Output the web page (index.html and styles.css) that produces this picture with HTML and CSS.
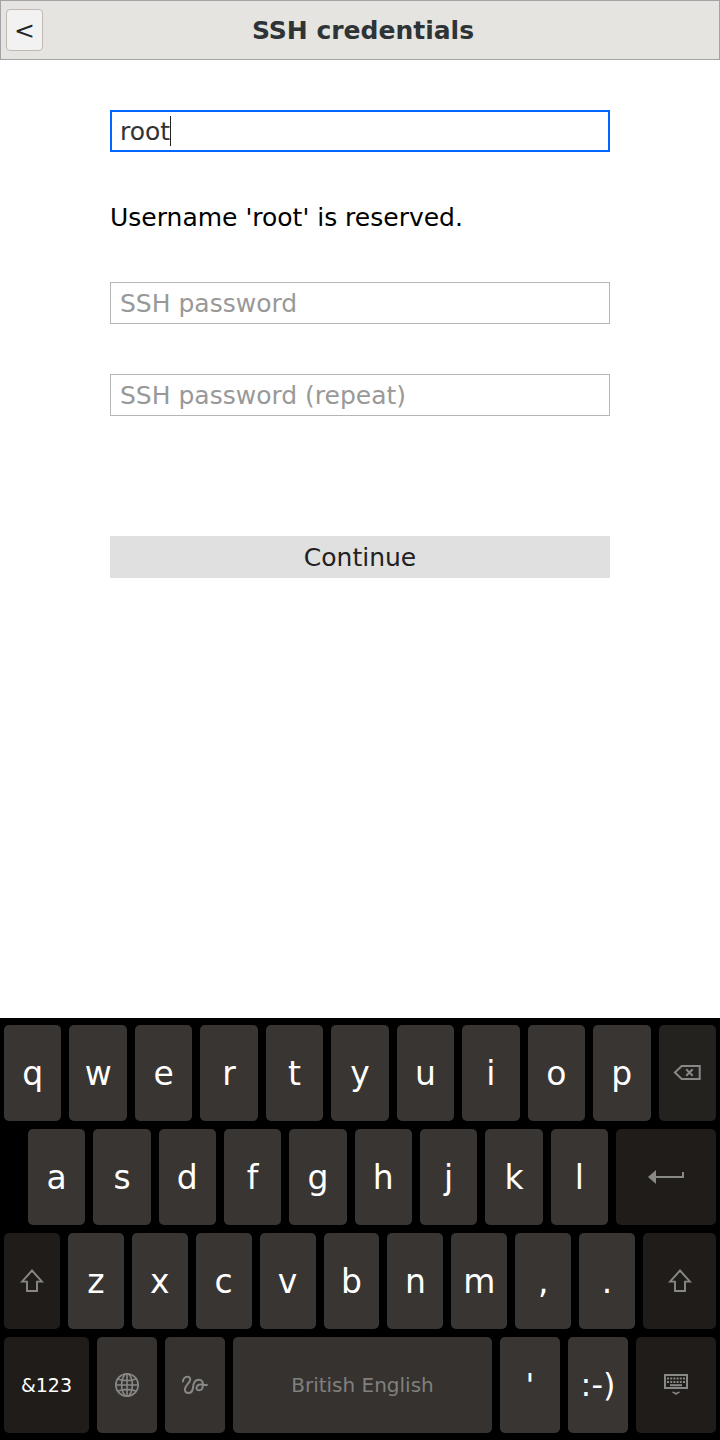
FILE: index.html
```html
<!DOCTYPE html>
<html lang="en">
<head>
<meta charset="utf-8">
<title>SSH credentials</title>
<link rel="stylesheet" href="styles.css">
</head>
<body>
<div class="screen">
  <header class="topbar">
    <button class="back">&lt;</button>
    <h1 class="title">SSH credentials</h1>
  </header>
  <main class="form">
    <div class="field focused"><span>root</span><i class="caret"></i></div>
    <p class="message">Username 'root' is reserved.</p>
    <div class="field placeholder">SSH password</div>
    <div class="field placeholder repeat">SSH password (repeat)</div>
    <button class="continue">Continue</button>
  </main>
  <section class="keyboard">
    <div class="row">
      <div class="key">q</div><div class="key">w</div><div class="key">e</div><div class="key">r</div><div class="key">t</div><div class="key">y</div><div class="key">u</div><div class="key">i</div><div class="key">o</div><div class="key">p</div>
      <div class="key backspace"><svg width="28" height="16" viewBox="-0.7 0 28 16"><path class="line" d="M8 1H26V14H8L1.2 7.5Z"/><path class="line" d="M12.5 4.3L19 10.7M19 4.3L12.5 10.7"/></svg></div>
    </div>
    <div class="row row-home">
      <div class="key">a</div><div class="key">s</div><div class="key">d</div><div class="key">f</div><div class="key">g</div><div class="key">h</div><div class="key">j</div><div class="key">k</div><div class="key">l</div>
      <div class="key dark enter"><svg width="36" height="14" viewBox="0 0 36 14"><path class="line" d="M7 7H35V2"/><path class="solid" d="M0 7L8 0V14Z"/></svg></div>
    </div>
    <div class="row">
      <div class="key dark"><svg width="24" height="24" viewBox="0 0 24 24"><path class="line shift" d="M12 1.5L22 12.6H17V22H7V12.6H2Z"/></svg></div>
      <div class="key">z</div><div class="key">x</div><div class="key">c</div><div class="key">v</div><div class="key">b</div><div class="key">n</div><div class="key">m</div><div class="key">,</div><div class="key">.</div>
      <div class="key dark shift-right"><svg width="24" height="24" viewBox="0 0 24 24"><path class="line shift" d="M12 1.5L22 12.6H17V22H7V12.6H2Z"/></svg></div>
    </div>
    <div class="row row-bottom">
      <div class="key dark symbols">&amp;123</div>
      <div class="key muted"><svg width="26" height="26" viewBox="0 0 26 26"><g class="line thin"><circle cx="13" cy="13" r="11.2"/><ellipse cx="13" cy="13" rx="5.4" ry="11.2"/><path d="M13 1.8V24.2M1.8 13H24.2M4 7Q13 10.2 22 7M4 19Q13 15.8 22 19"/></g></svg></div>
      <div class="key muted"><svg width="28" height="22" viewBox="0 0 28 22"><path class="line" d="M2 8.3C1.5 5.5 3.5 2.8 6.5 2.8C9 2.8 9.9 5 8.7 7.3C7.3 10 4 12 3.9 15.3C3.9 17.6 5.3 19 7.3 19C10.2 19 11.6 16.6 12 14C12.2 9.5 13.6 5.7 18 5.7C20.6 5.7 22.2 8 22 10.7C21.8 13.8 20.7 16.3 18.3 16.3C16.6 16.3 15.2 15.7 15.5 13.7C15.9 11.6 17.4 10.5 19.5 10.5C22 10.5 24 11.2 26.7 10.8"/></svg></div>
      <div class="key muted space">British English</div>
      <div class="key small-glyph">'</div>
      <div class="key small-glyph">:-)</div>
      <div class="key dark"><svg width="24" height="22" viewBox="0 0 24 22"><path class="line" d="M1 1H23V14H1Z"/><path class="keys" d="M3 4.5H21M3 8H21"/><path class="line" d="M6 11.2H18"/><path class="line thin" d="M8.5 18.3Q10.5 18.5 12 20Q13.5 18.5 15.5 18.3"/></svg></div>
    </div>
  </section>
</div>
</body>
</html>
```
FILE: styles.css
```css
* { box-sizing: border-box; }
body {
  margin: 0;
  background: #fff;
  font-family: "DejaVu Sans", sans-serif;
  font-size: 25px;
}
button { font: inherit; padding: 0; }
.screen {
  width: 720px;
  height: 1440px;
  display: flex;
  flex-direction: column;
}
.topbar {
  height: 60px;
  display: flex;
  align-items: center;
  padding: 0 0 0 5px;
  background: #e5e4e0;
  border: 1px solid #a3a2a4;
}
.back {
  width: 37px;
  height: 42px;
  border: 1px solid #c1bab4;
  border-radius: 4px;
  background: #f2f2f2;
  color: #232729;
}
.title {
  flex: 1;
  margin: 0;
  padding-right: 36px;
  text-align: center;
  font-size: 25px;
  font-weight: bold;
  color: #2e3436;
}
.form {
  flex: 1;
  display: flex;
  flex-direction: column;
  padding: 50px 110px 0;
}
.field {
  height: 42px;
  display: flex;
  align-items: center;
  padding: 0 9px;
  border: 1px solid #b6b6b6;
  color: #333;
}
.focused { border: 2px solid #06f; padding: 0 8px; }
.caret { width: 1px; height: 30px; background: #222; }
.message {
  height: 42px;
  line-height: 42px;
  margin: 45px 0 43px;
  color: #000;
}
.placeholder { color: #999; }
.repeat { margin-top: 50px; }
.continue {
  height: 42px;
  margin-top: 120px;
  border: 0;
  background: #e0e0e0;
  color: #222;
}
.keyboard {
  height: 422px;
  display: flex;
  flex-direction: column;
  gap: 8px;
  padding: 7px 4px;
  background: #000;
}
.row { display: flex; gap: 8px; height: 96px; }
.row-home { padding-left: 24px; }
.key {
  flex: 1 1 0;
  min-width: 0;
  display: flex;
  align-items: center;
  justify-content: center;
  border-radius: 5px;
  background: #393532;
  color: #fff;
  font-size: 33px;
  white-space: pre;
}
.small-glyph { font-size: 32px; }
.dark { background: #201c19; }
.backspace { background: #23221e; }
.muted { background: #36322f; color: #80807e; }
.enter { flex: 0 0 100px; }
.shift-right { flex: 0 0 73px; }
.row-bottom { display: grid; grid-template-columns: 85px 60px 60px 259px 60px 60px 80px; }
.symbols { font-size: 19px; }
.space { font-size: 20px; }
.line { fill: none; stroke: #888886; stroke-width: 2; }
.thin { stroke-width: 1.6; }
.shift { stroke-width: 1.9; }
.solid { fill: #888886; }
.keys { stroke: #888886; stroke-width: 2; stroke-dasharray: 2 1.2; }
```
